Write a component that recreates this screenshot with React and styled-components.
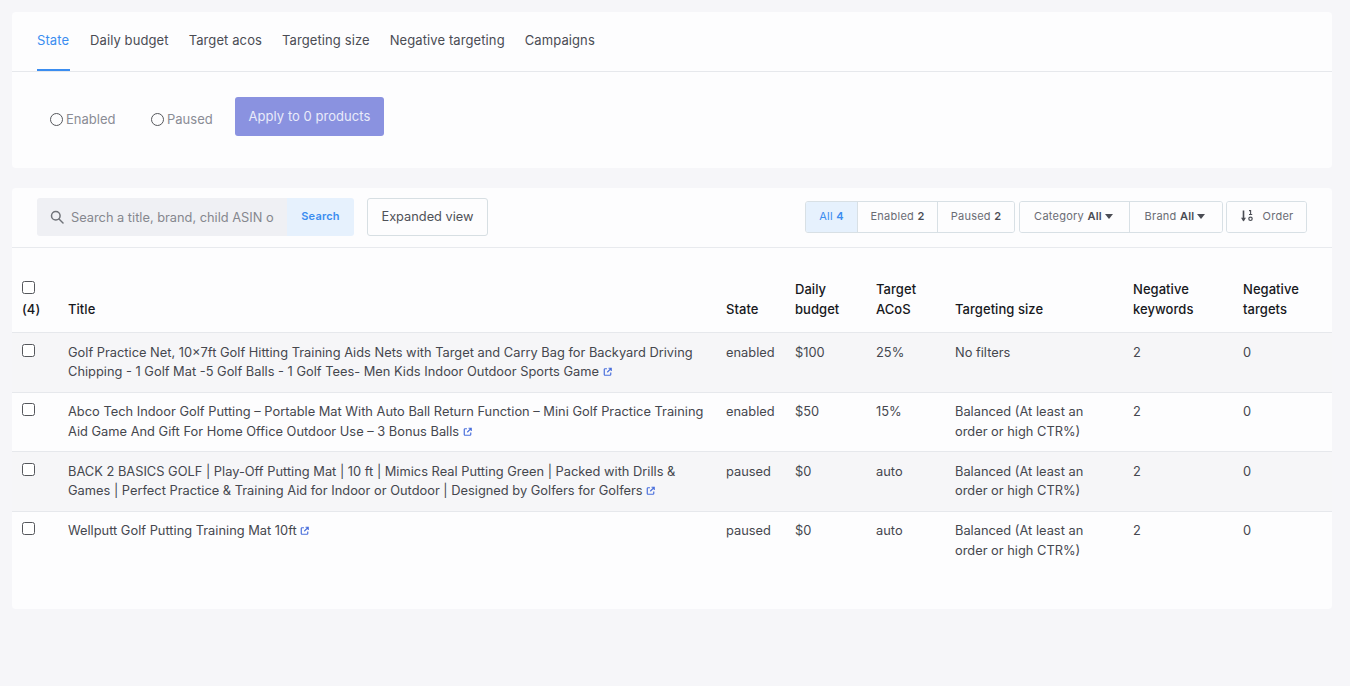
import styled, { createGlobalStyle } from "styled-components";

const GlobalStyle = createGlobalStyle`
  html, body {
    margin: 0;
    padding: 0;
    background: #f6f6f9;
  }
  body {
    font-family: Inter, "Liberation Sans", sans-serif;
    font-size: 13px;
    line-height: 19.5px;
    color: #3f4148;
  }
`;

const products = [
  {
    title:
      "Golf Practice Net, 10×7ft Golf Hitting Training Aids Nets with Target and Carry Bag for Backyard Driving Chipping - 1 Golf Mat -5 Golf Balls - 1 Golf Tees- Men Kids Indoor Outdoor Sports Game",
    state: "enabled",
    budget: "$100",
    acos: "25%",
    size: "No filters",
  },
  {
    title:
      "Abco Tech Indoor Golf Putting – Portable Mat With Auto Ball Return Function – Mini Golf Practice Training Aid Game And Gift For Home Office Outdoor Use – 3 Bonus Balls",
    state: "enabled",
    budget: "$50",
    acos: "15%",
    size: "Balanced (At least an order or high CTR%)",
  },
  {
    title:
      "BACK 2 BASICS GOLF | Play-Off Putting Mat | 10 ft | Mimics Real Putting Green | Packed with Drills & Games | Perfect Practice & Training Aid for Indoor or Outdoor | Designed by Golfers for Golfers",
    state: "paused",
    budget: "$0",
    acos: "auto",
    size: "Balanced (At least an order or high CTR%)",
  },
  {
    title: "Wellputt Golf Putting Training Mat 10ft",
    state: "paused",
    budget: "$0",
    acos: "auto",
    size: "Balanced (At least an order or high CTR%)",
  },
];

const tabs = ["State", "Daily budget", "Target acos", "Targeting size", "Negative targeting", "Campaigns"];

const ExternalIcon = () => (
  <LinkIcon viewBox="0 0 12 12" aria-hidden="true">
    <path d="M5 2.2H2.6A1 1 0 0 0 1.6 3.2v6.2a1 1 0 0 0 1 1h6.2a1 1 0 0 0 1-1V7" />
    <path d="M7 1.6h3.4V5M10.2 1.8 5.4 6.6" />
  </LinkIcon>
);

const App = () => {
  return (
    <Page>
      <GlobalStyle />
      <TopCard>
        <TabBar>
          {tabs.map((tab, i) => (
            <Tab key={tab} $active={i === 0}>
              {tab}
            </Tab>
          ))}
        </TabBar>
        <StateForm>
          <RadioLabel>
            <Radio />
            Enabled
          </RadioLabel>
          <RadioLabel>
            <Radio />
            Paused
          </RadioLabel>
          <ApplyButton>Apply to 0 products</ApplyButton>
        </StateForm>
      </TopCard>

      <TableCard>
        <Toolbar>
          <SearchBox>
            <SearchField>
              <svg width="14" height="14" viewBox="0 0 14 14" fill="none" stroke="#6f7278" strokeWidth="1.5">
                <circle cx="5.8" cy="5.8" r="4.3" />
                <path d="M9 9l4 4" strokeLinecap="round" />
              </svg>
              <SearchInput readOnly placeholder="Search a title, brand, child ASIN or SKU" />
            </SearchField>
            <SearchButton>Search</SearchButton>
          </SearchBox>
          <ExpandButton>Expanded view</ExpandButton>
          <Filters>
            <FilterGroup>
              <FilterButton $active $w={52}>
                All <b>4</b>
              </FilterButton>
              <FilterButton $w={80}>
                Enabled <b>2</b>
              </FilterButton>
              <FilterButton $w={76}>
                Paused <b>2</b>
              </FilterButton>
            </FilterGroup>
            <FilterGroup>
              <FilterButton $w={110}>
                Category <b>All</b>
                <Caret />
              </FilterButton>
              <FilterButton $w={92}>
                Brand <b>All</b>
                <Caret />
              </FilterButton>
            </FilterGroup>
            <FilterGroup>
              <FilterButton $w={79}>
                <OrderIcon viewBox="0 0 14 14">
                  <path d="M3.5 1.5v10" strokeWidth="1.6" />
                  <path d="M1 8.8h5L3.5 12.6z" fill="#4b4e55" stroke="none" />
                  <path d="M9 1.6h1.6v4M9 5.5h3.2" strokeWidth="1.1" />
                  <circle cx="10.5" cy="9.8" r="1.7" strokeWidth="1.2" />
                </OrderIcon>
                Order
              </FilterButton>
            </FilterGroup>
          </Filters>
        </Toolbar>

        <Table>
          <colgroup>
            <col width="46" />
            <col width="658" />
            <col width="69" />
            <col width="81" />
            <col width="79" />
            <col width="178" />
            <col width="110" />
            <col width="99" />
          </colgroup>
          <thead>
            <tr>
              <Th>
                <Check />
                <br />
                (4)
              </Th>
              <Th>Title</Th>
              <Th>State</Th>
              <Th>
                Daily
                <br />
                budget
              </Th>
              <Th>
                Target
                <br />
                ACoS
              </Th>
              <Th>Targeting size</Th>
              <Th>
                Negative
                <br />
                keywords
              </Th>
              <Th>
                Negative
                <br />
                targets
              </Th>
            </tr>
          </thead>
          <tbody>
            {products.map((p) => (
              <Row key={p.title}>
                <Td>
                  <Check />
                </Td>
                <Td>
                  {p.title} <ExternalIcon />
                </Td>
                <Td>{p.state}</Td>
                <Td>{p.budget}</Td>
                <Td>{p.acos}</Td>
                <Td>{p.size}</Td>
                <Td>2</Td>
                <Td>0</Td>
              </Row>
            ))}
          </tbody>
        </Table>
      </TableCard>
    </Page>
  );
};

export default App;

const Page = styled.div`
  box-sizing: border-box;
  min-height: 686px;
  padding: 12px 18px 12px 12px;
  display: flex;
  flex-direction: column;
  gap: 20px;
`;

const Card = styled.section`
  background: #fdfdfe;
  border-radius: 4px;
`;

const TopCard = styled(Card)`
  height: 156px;
`;

const TableCard = styled(Card)`
  height: 421px;
`;

const TabBar = styled.nav`
  box-sizing: border-box;
  height: 60px;
  padding: 0 25px;
  display: flex;
  gap: 20px;
  border-bottom: 1px solid #e6e8ec;
`;

const Tab = styled.a`
  display: block;
  min-width: 33px;
  height: 59px;
  box-sizing: border-box;
  padding-top: 19px;
  letter-spacing: 0.1px;
  color: ${(p) => (p.$active ? "#3b8df0" : "#4a4c54")};
  border-bottom: ${(p) => (p.$active ? "2px solid #3b8df0" : "none")};
`;

const StateForm = styled.div`
  display: flex;
  align-items: flex-start;
  padding: 25px 0 0 38px;
`;

const RadioLabel = styled.label`
  display: flex;
  align-items: center;
  gap: 3px;
  width: 101px;
  height: 19px;
  margin-top: 13px;
  color: #8a8c95;
`;

const Radio = styled.span`
  box-sizing: border-box;
  width: 13px;
  height: 13px;
  border: 1px solid #55575c;
  border-radius: 50%;
`;

const ApplyButton = styled.button`
  box-sizing: border-box;
  width: 149px;
  height: 39px;
  margin-left: -17px;
  padding: 0;
  border: none;
  border-radius: 3px;
  background: #8a92e0;
  color: #e9ebfa;
  font: inherit;
  letter-spacing: 0.04px;
`;

const Toolbar = styled.div`
  box-sizing: border-box;
  height: 60px;
  padding: 10px 25px 0;
  display: flex;
  align-items: flex-start;
  border-bottom: 1px solid #e8eaee;
`;

const SearchBox = styled.div`
  display: flex;
  width: 317px;
  height: 38px;
  border-radius: 3px;
  overflow: hidden;
`;

const SearchField = styled.div`
  flex: 1;
  min-width: 0;
  padding-left: 13px;
  display: flex;
  align-items: center;
  gap: 7px;
  background: #eff0f4;
`;

const SearchInput = styled.input`
  width: 203px;
  padding: 1px 0 0;
  border: none;
  outline: none;
  background: transparent;
  font: inherit;
  font-size: 12.8px;

  &::placeholder {
    color: #85878e;
    opacity: 1;
  }
`;

const SearchButton = styled.button`
  width: 67px;
  padding: 0 0 3px;
  border: none;
  background: #e6f1fd;
  color: #3b8df0;
  font: 600 11px Inter, sans-serif;
  letter-spacing: 0.2px;
`;

const ExpandButton = styled.button`
  box-sizing: border-box;
  width: 121px;
  height: 38px;
  margin-left: 13px;
  padding: 0;
  border: 1px solid #d7dfe3;
  border-radius: 3px;
  background: #fdfdfe;
  color: #4f5158;
  font: inherit;
  font-size: 12.8px;
`;

const Filters = styled.div`
  margin-left: auto;
  margin-top: 3px;
  display: flex;
  gap: 4px;
`;

const FilterGroup = styled.div`
  display: flex;
  height: 32px;
  box-sizing: border-box;
  border: 1px solid #d8e0e5;
  border-radius: 3px;
  overflow: hidden;

  &:last-child {
    margin-left: -1px;
  }
`;

const FilterButton = styled.button`
  box-sizing: border-box;
  display: flex;
  align-items: center;
  justify-content: center;
  width: ${(p) => p.$w}px;
  height: 30px;
  padding: 0 0 2px;
  border: none;
  border-right: 1px solid #d8e0e5;
  background: ${(p) => (p.$active ? "#e6f1fd" : "#fdfdfe")};
  color: ${(p) => (p.$active ? "#3b8df0" : "#6a6c74")};
  font: 400 11px Inter, sans-serif;
  letter-spacing: 0.25px;
  white-space: pre;

  &:last-child {
    border-right: none;
  }

  & b {
    font-weight: 600;
    color: ${(p) => (p.$active ? "#3b8df0" : "#4a4c54")};
  }
`;

const Caret = styled.span`
  width: 0;
  height: 0;
  margin: 0 2px 0 3px;
  border-left: 4px solid transparent;
  border-right: 4px solid transparent;
  border-top: 5px solid #4a4c54;
`;

const OrderIcon = styled.svg`
  width: 14px;
  height: 14px;
  margin-right: 9px;
  fill: none;
  stroke: #4b4e55;
  stroke-width: 1.3;
`;

const Table = styled.table`
  width: 1320px;
  table-layout: fixed;
  border-collapse: collapse;
`;

const Th = styled.th`
  box-sizing: border-box;
  height: 84.5px;
  padding: 0 10px 13.5px;
  vertical-align: bottom;
  text-align: left;
  font-weight: 500;
  color: #17181c;
  letter-spacing: 0.05px;
  border-bottom: 1px solid #e6e8ec;
  line-height: 20px;
`;

const Row = styled.tr`
  &:nth-child(odd) {
    background: #f6f6f8;
  }
  &:not(:last-child) {
    border-bottom: 1px solid #e6e8ec;
  }
`;

const Td = styled.td`
  padding: 9.5px 10px 10px;
  vertical-align: top;
  font-size: 12.85px;
  color: #45474e;
`;

const Check = styled.span`
  display: inline-block;
  box-sizing: border-box;
  width: 13px;
  height: 13px;
  border: 1px solid #55575c;
  border-radius: 2.5px;
  background: #fff;
  vertical-align: 0;
`;

const LinkIcon = styled.svg`
  width: 9.5px;
  height: 9.5px;
  fill: none;
  stroke: #4a6fdc;
  stroke-width: 1.5;
  vertical-align: -0.5px;
`;
